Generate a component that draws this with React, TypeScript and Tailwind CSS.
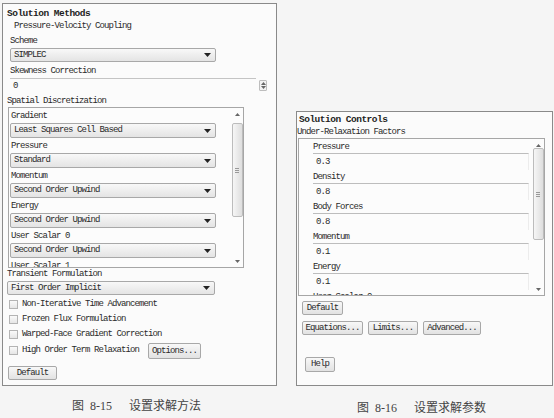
import React from "react";

const mono = "font-['Liberation_Mono','DejaVu_Sans_Mono',monospace] text-[9px] tracking-[-0.9px] text-[#2a2a2a]";
const monoBold = "font-['Liberation_Mono','DejaVu_Sans_Mono',monospace] text-[9.5px] font-bold tracking-[-0.5px] text-[#1e1e1e]";

function Arrow() {
  return (
    <svg width="7" height="4" viewBox="0 0 7 4" className="shrink-0">
      <polygon points="0,0 7,0 3.5,4" fill="#222" />
    </svg>
  );
}

function Dropdown({ text, w, h = "h-[15px]" }: { text: string; w: string; h?: string }) {
  return (
    <div
      className={`${w} ${h} border border-[#a8a8a8] rounded-[2px] bg-linear-to-b from-[#f8f8f8] to-[#e4e4e4] flex items-center justify-between pl-[3px] pr-[4px]`}
    >
      <span className={`${mono} leading-none whitespace-nowrap`}>{text}</span>
      <Arrow />
    </div>
  );
}

function Btn({ text, w, h = "h-[14px]" }: { text: string; w: string; h?: string }) {
  return (
    <div
      className={`${w} ${h} border border-[#a8a8a8] rounded-[2px] bg-linear-to-b from-[#f8f8f8] to-[#e2e2e2] flex items-center justify-center`}
    >
      <span className={`${mono} leading-none whitespace-nowrap`}>{text}</span>
    </div>
  );
}

function Check({ label, children }: { label: string; children?: React.ReactNode }) {
  return (
    <div className="h-[15px] flex items-center pl-[6px]">
      <div className="w-[9px] h-[9px] border border-[#b4b4b4] bg-linear-to-b from-[#fafafa] to-[#e6e6e6] shrink-0" />
      <span className={`${mono} leading-none whitespace-nowrap ml-[4px]`}>{label}</span>
      {children}
    </div>
  );
}

function UpTri() {
  return (
    <svg width="5" height="3" viewBox="0 0 5 3">
      <polygon points="0,3 5,3 2.5,0" fill="#666" />
    </svg>
  );
}
function DownTri() {
  return (
    <svg width="5" height="3" viewBox="0 0 5 3">
      <polygon points="0,0 5,0 2.5,3" fill="#666" />
    </svg>
  );
}

function ScrollBar({ thumbTop, thumbH }: { thumbTop: string; thumbH: string }) {
  return (
    <div className="w-[12px] h-full flex flex-col items-center shrink-0">
      <div className="h-[12px] w-full flex items-center justify-center">
        <UpTri />
      </div>
      <div
        className={`${thumbTop} ${thumbH} w-[11px] border border-[#bcbcbc] rounded-[2px] bg-linear-to-r from-[#f6f6f6] to-[#dedede] flex flex-col items-center justify-center gap-[1px]`}
      >
        <div className="w-[4px] h-px bg-[#999]" />
        <div className="w-[4px] h-px bg-[#999]" />
        <div className="w-[4px] h-px bg-[#999]" />
      </div>
      <div className="flex-1" />
      <div className="h-[12px] w-full flex items-center justify-center">
        <DownTri />
      </div>
    </div>
  );
}

function DiscRow({ label, value }: { label: string; value?: string }) {
  return (
    <div className="flex flex-col mb-[2px]">
      <div className={`h-[13px] pl-[2px] leading-[13px] ${mono}`}>{label}</div>
      {value && (
        <div className="ml-[1px]">
          <Dropdown text={value} w="w-[206px]" />
        </div>
      )}
    </div>
  );
}

function FactorRow({ label, value }: { label: string; value?: string }) {
  return (
    <div className="flex flex-col pl-[14px]">
      <div className={`h-[13px] leading-[14px] ${mono}`}>{label}</div>
      {value && (
        <div className="h-[17px] w-[216px] border-t border-[#bdbdbd] border-r border-r-[#ececec] flex items-center pl-[3px]">
          <span className={`${mono} leading-none`}>{value}</span>
        </div>
      )}
    </div>
  );
}

const caption = "font-['Liberation_Serif','Noto_Sans_CJK_SC',serif] text-[12px] text-[#444] leading-[16px] whitespace-nowrap";

export default function App() {
  return (
    <div className="w-[554px] h-[418px] bg-[#f5f5f5] flex overflow-hidden">
      {/* Left column */}
      <div className="flex flex-col pl-[2px] pt-[3px]">
        <div className="w-[275px] h-[383px] border border-[#8a8a8a] bg-[#fbfbfb] flex flex-col pt-[4px]">
          <div className={`h-[12px] leading-[12px] pl-[4px] whitespace-nowrap ${monoBold}`}>Solution Methods</div>
          <div className={`h-[13px] leading-[13px] pl-[11px] ${mono}`}>Pressure-Velocity Coupling</div>
          <div className={`h-[14px] leading-[14px] mt-[1px] pl-[7px] ${mono}`}>Scheme</div>
          <div className="pl-[7px]">
            <Dropdown text="SIMPLEC" w="w-[206px]" h="h-[14px]" />
          </div>
          <div className={`h-[13px] leading-[13px] mt-[3px] pl-[7px] ${mono}`}>Skewness Correction</div>
          <div className="h-[17px] ml-[7px] flex items-start">
            <div className="w-[246px] h-[16px] border-t border-[#c4c4c4] flex items-center pl-[3px]">
              <span className={`${mono} leading-none`}>0</span>
            </div>
            <div className="ml-[3px] mt-[2px] w-[8px] h-[11px] border border-[#bdbdbd] rounded-[1px] bg-[#f2f2f2] flex flex-col items-center justify-center gap-[1px]">
              <UpTri />
              <DownTri />
            </div>
          </div>
          <div className={`h-[12px] leading-[12px] pl-[4px] ${mono}`}>Spatial Discretization</div>
          {/* Scroll box */}
          <div className="ml-[5px] w-[236px] h-[161px] border border-[#a6a6a6] bg-[#fcfcfc] flex overflow-hidden">
            <div className="w-[221px] flex flex-col pt-[2px] overflow-hidden">
              <DiscRow label="Gradient" value="Least Squares Cell Based" />
              <DiscRow label="Pressure" value="Standard" />
              <DiscRow label="Momentum" value="Second Order Upwind" />
              <DiscRow label="Energy" value="Second Order Upwind" />
              <DiscRow label="User Scalar 0" value="Second Order Upwind" />
              <DiscRow label="User Scalar 1" />
            </div>
            <div className="flex-1" />
            <ScrollBar thumbTop="mt-[3px]" thumbH="h-[94px]" />
          </div>
          <div className={`h-[13px] leading-[13px] pl-[4px] ${mono}`}>Transient Formulation</div>
          <div className="pl-[4px]">
            <Dropdown text="First Order Implicit" w="w-[208px]" h="h-[14px]" />
          </div>
          <div className="mt-[2px] flex flex-col">
            <Check label="Non-Iterative Time Advancement" />
            <Check label="Frozen Flux Formulation" />
            <Check label="Warped-Face Gradient Correction" />
            <div className="h-[17px] flex items-center">
              <Check label="High Order Term Relaxation">
                <div className="ml-[9px] mt-[1px]">
                  <Btn text="Options..." w="w-[53px]" h="h-[16px]" />
                </div>
              </Check>
            </div>
          </div>
          <div className="mt-[7px] ml-[5px]">
            <Btn text="Default" w="w-[49px]" />
          </div>
        </div>
        <div className={`mt-[12px] h-[16px] pl-[70px] flex ${caption}`}>
          <span>图</span>
          <span className="ml-[6px]">8-15</span>
          <span className="ml-[17px]">设置求解方法</span>
        </div>
      </div>

      {/* Right column */}
      <div className="flex flex-col ml-[19px] pt-[111px]">
        <div className="w-[257px] h-[275px] border border-[#8a8a8a] bg-[#fbfbfb] flex flex-col pt-[2px]">
          <div className={`h-[12px] leading-[12px] pl-[2px] whitespace-nowrap ${monoBold}`}>Solution Controls</div>
          <div className={`h-[12px] leading-[12px] ${mono}`}>Under-Relaxation Factors</div>
          <div className="ml-[1px] w-[247px] h-[158px] border border-[#a6a6a6] bg-[#fcfcfc] flex overflow-hidden">
            <div className="w-[234px] flex flex-col pt-[1px] overflow-hidden">
              <FactorRow label="Pressure" value="0.3" />
              <FactorRow label="Density" value="0.8" />
              <FactorRow label="Body Forces" value="0.8" />
              <FactorRow label="Momentum" value="0.1" />
              <FactorRow label="Energy" value="0.1" />
              <FactorRow label="User Scalar 0" />
            </div>
            <ScrollBar thumbTop="mt-[-3px]" thumbH="h-[92px]" />
          </div>
          <div className="mt-[5px] ml-[5px]">
            <Btn text="Default" w="w-[41px]" />
          </div>
          <div className="mt-[6px] ml-[5px] flex gap-[5px]">
            <Btn text="Equations..." w="w-[61px]" />
            <Btn text="Limits..." w="w-[50px]" />
            <Btn text="Advanced..." w="w-[58px]" />
          </div>
          <div className="mt-[22px] ml-[8px]">
            <Btn text="Help" w="w-[30px]" h="h-[15px]" />
          </div>
        </div>
        <div className={`mt-[14px] h-[16px] pl-[61px] flex ${caption}`}>
          <span>图</span>
          <span className="ml-[6px]">8-16</span>
          <span className="ml-[17px]">设置求解参数</span>
        </div>
      </div>
    </div>
  );
}
